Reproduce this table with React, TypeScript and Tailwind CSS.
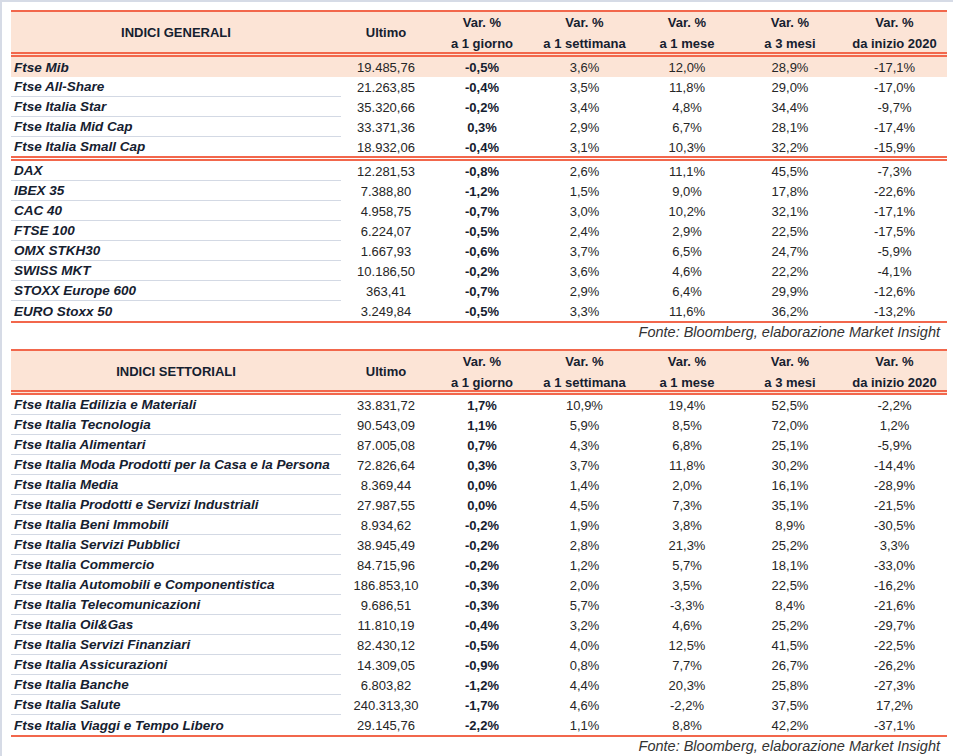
import React from "react"

type Row = [string, string, string, string, string, string, string]

const generali: Row[][] = [
  [
    ["Ftse Mib", "19.485,76", "-0,5%", "3,6%", "12,0%", "28,9%", "-17,1%"],
    ["Ftse All-Share", "21.263,85", "-0,4%", "3,5%", "11,8%", "29,0%", "-17,0%"],
    ["Ftse Italia Star", "35.320,66", "-0,2%", "3,4%", "4,8%", "34,4%", "-9,7%"],
    ["Ftse Italia Mid Cap", "33.371,36", "0,3%", "2,9%", "6,7%", "28,1%", "-17,4%"],
    ["Ftse Italia Small Cap", "18.932,06", "-0,4%", "3,1%", "10,3%", "32,2%", "-15,9%"],
  ],
  [
    ["DAX", "12.281,53", "-0,8%", "2,6%", "11,1%", "45,5%", "-7,3%"],
    ["IBEX 35", "7.388,80", "-1,2%", "1,5%", "9,0%", "17,8%", "-22,6%"],
    ["CAC 40", "4.958,75", "-0,7%", "3,0%", "10,2%", "32,1%", "-17,1%"],
    ["FTSE 100", "6.224,07", "-0,5%", "2,4%", "2,9%", "22,5%", "-17,5%"],
    ["OMX STKH30", "1.667,93", "-0,6%", "3,7%", "6,5%", "24,7%", "-5,9%"],
    ["SWISS MKT", "10.186,50", "-0,2%", "3,6%", "4,6%", "22,2%", "-4,1%"],
    ["STOXX Europe 600", "363,41", "-0,7%", "2,9%", "6,4%", "29,9%", "-12,6%"],
    ["EURO Stoxx 50", "3.249,84", "-0,5%", "3,3%", "11,6%", "36,2%", "-13,2%"],
  ],
]

const settoriali: Row[][] = [
  [
    ["Ftse Italia Edilizia e Materiali", "33.831,72", "1,7%", "10,9%", "19,4%", "52,5%", "-2,2%"],
    ["Ftse Italia Tecnologia", "90.543,09", "1,1%", "5,9%", "8,5%", "72,0%", "1,2%"],
    ["Ftse Italia Alimentari", "87.005,08", "0,7%", "4,3%", "6,8%", "25,1%", "-5,9%"],
    ["Ftse Italia Moda Prodotti per la Casa e la Persona", "72.826,64", "0,3%", "3,7%", "11,8%", "30,2%", "-14,4%"],
    ["Ftse Italia Media", "8.369,44", "0,0%", "1,4%", "2,0%", "16,1%", "-28,9%"],
    ["Ftse Italia Prodotti e Servizi Industriali", "27.987,55", "0,0%", "4,5%", "7,3%", "35,1%", "-21,5%"],
    ["Ftse Italia Beni Immobili", "8.934,62", "-0,2%", "1,9%", "3,8%", "8,9%", "-30,5%"],
    ["Ftse Italia Servizi Pubblici", "38.945,49", "-0,2%", "2,8%", "21,3%", "25,2%", "3,3%"],
    ["Ftse Italia Commercio", "84.715,96", "-0,2%", "1,2%", "5,7%", "18,1%", "-33,0%"],
    ["Ftse Italia Automobili e Componentistica", "186.853,10", "-0,3%", "2,0%", "3,5%", "22,5%", "-16,2%"],
    ["Ftse Italia Telecomunicazioni", "9.686,51", "-0,3%", "5,7%", "-3,3%", "8,4%", "-21,6%"],
    ["Ftse Italia Oil&Gas", "11.810,19", "-0,4%", "3,2%", "4,6%", "25,2%", "-29,7%"],
    ["Ftse Italia Servizi Finanziari", "82.430,12", "-0,5%", "4,0%", "12,5%", "41,5%", "-22,5%"],
    ["Ftse Italia Assicurazioni", "14.309,05", "-0,9%", "0,8%", "7,7%", "26,7%", "-26,2%"],
    ["Ftse Italia Banche", "6.803,82", "-1,2%", "4,4%", "20,3%", "25,8%", "-27,3%"],
    ["Ftse Italia Salute", "240.313,30", "-1,7%", "4,6%", "-2,2%", "37,5%", "17,2%"],
    ["Ftse Italia Viaggi e Tempo Libero", "29.145,76", "-2,2%", "1,1%", "8,8%", "42,2%", "-37,1%"],
  ],
]

const cols = "grid grid-cols-[330px_90px_102px_103px_102px_104px_105px]"

const periods = ["a 1 giorno", "a 1 settimana", "a 1 mese", "a 3 mesi", "da inizio 2020"]

function Header({ title, tall }: { title: string; tall: boolean }) {
  return (
    <div className={`${cols} ${tall ? "h-[47px]" : "h-[46px]"} bg-[#fce4d6] border-t-2 border-b-[5px] border-double border-t-[#f2674c] border-b-[#f2674c] font-bold text-[13px] text-[#15202f]`}>
      <div className="flex items-center justify-center">{title}</div>
      <div className="flex items-center justify-center">Ultimo</div>
      {periods.map((p) => (
        <div key={p} className="flex flex-col items-center justify-center leading-[21px]">
          <span>Var. %</span>
          <span>{p}</span>
        </div>
      ))}
    </div>
  )
}

function DataRow({ row, last, highlight, groupEnd }: { row: Row; last: boolean; highlight?: boolean; groupEnd?: "double" | "single" }) {
  const [name, ultimo, giorno, ...rest] = row
  let rowCls = "h-5"
  if (groupEnd === "double") rowCls = "h-[24px] border-b-[5px] border-double border-[#f2674c]"
  if (groupEnd === "single") rowCls = "h-[22px] border-b-2 border-[#f2674c]"
  return (
    <div className={`${cols} ${rowCls} text-[13px] leading-none ${highlight ? "bg-[#fce4d6]" : ""}`}>
      <div className={`flex items-center pl-[3px] pt-px text-[13.5px] font-bold italic text-[#15202f] ${!last && !highlight ? "border-b border-[#d3d9e4]" : ""}`}>
        {name}
      </div>
      <div className="flex items-center justify-center pt-px text-[#262626]">{ultimo}</div>
      <div className="flex items-center justify-center pt-px font-bold text-[#15202f]">{giorno}</div>
      {rest.map((v, i) => (
        <div key={i} className="flex items-center justify-center pt-px text-[#262626]">
          {v}
        </div>
      ))}
    </div>
  )
}

function Table({ title, groups, tall }: { title: string; groups: Row[][]; tall: boolean }) {
  return (
    <div>
      <Header title={title} tall={tall} />
      {groups.map((g, gi) => (
        <div key={gi}>
          {g.map((r, ri) => {
            const isLast = ri === g.length - 1
            const end = isLast ? (gi === groups.length - 1 ? "single" : "double") : undefined
            return (
              <DataRow
                key={r[0]}
                row={r}
                last={isLast}
                highlight={title === "INDICI GENERALI" && gi === 0 && ri === 0}
                groupEnd={end}
              />
            )
          })}
        </div>
      ))}
      <div className="h-5 flex items-center justify-end pr-[7px] text-[14.5px] italic text-[#333]">
        Fonte: Bloomberg, elaborazione Market Insight
      </div>
    </div>
  )
}

export default function App() {
  return (
    <div className="min-h-[756px] bg-[#d6dbe6] pl-[2px] pt-[2px] font-['Liberation_Sans',Arial,sans-serif]">
      <div className="min-h-[754px] bg-white pl-[9px] pr-[6px] pt-2">
        <div className="w-[936px] flex flex-col gap-[6px]">
          <Table title="INDICI GENERALI" groups={generali} tall />
          <Table title="INDICI SETTORIALI" groups={settoriali} tall={false} />
        </div>
      </div>
    </div>
  )
}
